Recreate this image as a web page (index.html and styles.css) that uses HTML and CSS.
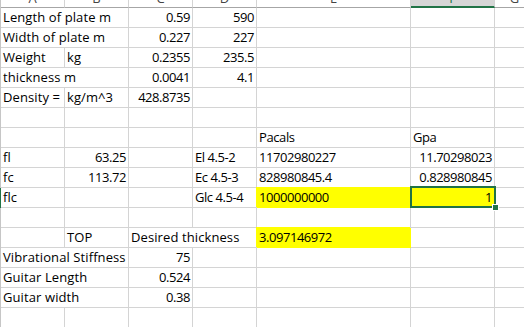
FILE: index.html
```html
<!DOCTYPE html>
<html>
<head>
<meta charset="utf-8">
<link rel="stylesheet" href="styles.css">
</head>
<body>
<div class="sheet">
  <div class="rh hdr"></div>
  <div class="hc"><span>A</span></div><div class="hc"><span>B</span></div><div class="hc"><span>C</span></div><div class="hc"><span>D</span></div><div class="hc"><span>E</span></div><div class="hc selcol"><span>F</span></div><div class="hc"><span>G</span></div>

  <div class="rh"></div>
  <div class="c t s2">Length of plate m</div><div class="c n">0.59</div><div class="c n">590</div><div class="c"></div><div class="c"></div><div class="c"></div>

  <div class="rh"></div>
  <div class="c t s2">Width of plate m</div><div class="c n">0.227</div><div class="c n">227</div><div class="c"></div><div class="c"></div><div class="c"></div>

  <div class="rh"></div>
  <div class="c t">Weight</div><div class="c t">kg</div><div class="c n">0.2355</div><div class="c n">235.5</div><div class="c"></div><div class="c"></div><div class="c"></div>

  <div class="rh"></div>
  <div class="c t s2">thickness m</div><div class="c n">0.0041</div><div class="c n">4.1</div><div class="c"></div><div class="c"></div><div class="c"></div>

  <div class="rh"></div>
  <div class="c t">Density =</div><div class="c t">kg/m^3</div><div class="c n">428.8735</div><div class="c"></div><div class="c"></div><div class="c"></div><div class="c"></div>

  <div class="rh"></div>
  <div class="c"></div><div class="c"></div><div class="c"></div><div class="c"></div><div class="c"></div><div class="c"></div><div class="c"></div>

  <div class="rh"></div>
  <div class="c"></div><div class="c"></div><div class="c"></div><div class="c"></div><div class="c p">Pacals</div><div class="c p">Gpa</div><div class="c"></div>

  <div class="rh"></div>
  <div class="c t">fl</div><div class="c n">63.25</div><div class="c"></div><div class="c k">El 4.5-2</div><div class="c k">11702980227</div><div class="c n">11.70298023</div><div class="c"></div>

  <div class="rh"></div>
  <div class="c t">fc</div><div class="c n">113.72</div><div class="c"></div><div class="c k">Ec 4.5-3</div><div class="c k">828980845.4</div><div class="c n">0.828980845</div><div class="c"></div>

  <div class="rh selrow"></div>
  <div class="c t">flc</div><div class="c"></div><div class="c"></div><div class="c k">Glc 4.5-4</div><div class="c k y">1000000000</div><div class="c n y">1</div><div class="c"></div>

  <div class="rh"></div>
  <div class="c"></div><div class="c"></div><div class="c"></div><div class="c"></div><div class="c"></div><div class="c"></div><div class="c"></div>

  <div class="rh"></div>
  <div class="c"></div><div class="c t">TOP</div><div class="c t s2">Desired thickness</div><div class="c k y">3.097146972</div><div class="c"></div><div class="c"></div>

  <div class="rh"></div>
  <div class="c t s2">Vibrational Stiffness</div><div class="c n">75</div><div class="c"></div><div class="c"></div><div class="c"></div><div class="c"></div>

  <div class="rh"></div>
  <div class="c t s2">Guitar Length</div><div class="c n">0.524</div><div class="c"></div><div class="c"></div><div class="c"></div><div class="c"></div>

  <div class="rh"></div>
  <div class="c t s2">Guitar width</div><div class="c n">0.38</div><div class="c"></div><div class="c"></div><div class="c"></div><div class="c"></div>

  <div class="rh"></div>
  <div class="c"></div><div class="c"></div><div class="c"></div><div class="c"></div><div class="c"></div><div class="c"></div><div class="c"></div>

  <div class="selbox"></div>
  <div class="handle"></div>
</div>
</body>
</html>
```

FILE: styles.css
```css
html, body {
  margin: 0;
  padding: 0;
  background: #ffffff;
}

body {
  font-family: "Open Sans", "Liberation Sans", Arial, sans-serif;
  font-size: 13px;
  color: #000000;
}

.sheet {
  position: relative;
  display: grid;
  grid-template-columns: 1px 64px 64px 64px 64px 154px 84px 40px;
  grid-template-rows: 8px;
  grid-auto-rows: 20px;
  width: 524px;
  height: 327px;
  overflow: hidden;
}

.rh {
  background: #c6c6c6;
}

.rh.selrow {
  background: #217346;
}

.hc {
  box-sizing: border-box;
  border-right: 1px solid #d4d4d4;
  border-bottom: 1px solid #a6a6a6;
  overflow: hidden;
  text-align: center;
  color: #444444;
}

.hc span {
  display: block;
  line-height: 13px;
  margin-top: -8px;
}

.hc.selcol {
  background: #d6d6d6;
  border-bottom: 2px solid #217346;
  color: #217346;
}

.c {
  box-sizing: border-box;
  border-right: 1px solid #d4d4d4;
  border-bottom: 1px solid #d4d4d4;
  padding: 0 2px 0 2px;
  line-height: 19px;
  white-space: nowrap;
  overflow: hidden;
}

.s2 {
  grid-column: span 2;
}

.t {
  letter-spacing: 0.1px;
}

.p {
  letter-spacing: -0.4px;
}

.k {
  letter-spacing: -0.45px;
}

.n {
  text-align: right;
  letter-spacing: -0.45px;
}

.y {
  background: #ffff00;
  border-color: #ffff00;
  box-shadow: -1px -1px 0 0 #ffff00;
}

.selbox {
  position: absolute;
  left: 410px;
  top: 186px;
  width: 86px;
  height: 22px;
  box-sizing: border-box;
  border: 2px solid #217346;
}

.handle {
  position: absolute;
  left: 492px;
  top: 204px;
  width: 5px;
  height: 5px;
  background: #217346;
  border: 1px solid #ffffff;
}
```
